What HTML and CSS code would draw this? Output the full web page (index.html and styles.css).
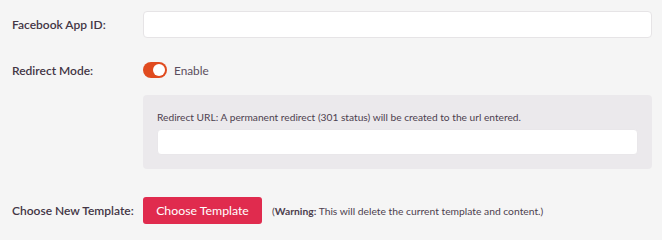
FILE: index.html
```html
<!DOCTYPE html>
<html>
<head>
<meta charset="utf-8">
<link rel="stylesheet" href="styles.css">
</head>
<body>
<div class="form">
  <div class="row row-first">
    <label class="label">Facebook App ID:</label>
    <div class="field"><input class="input" type="text"></div>
  </div>
  <div class="row row-toggle">
    <label class="label">Redirect Mode:</label>
    <div class="field toggle-field">
      <span class="toggle"><span class="knob"></span></span>
      <span class="toggle-text">Enable</span>
    </div>
  </div>
  <div class="row row-box">
    <div class="label"></div>
    <div class="field">
      <div class="box">
        <div class="box-text">Redirect URL: A permanent redirect (301 status) will be created to the url entered.</div>
        <input class="input input-inner" type="text">
      </div>
    </div>
  </div>
  <div class="row row-template">
    <label class="label">Choose New Template:</label>
    <div class="field template-field">
      <button class="btn">Choose Template</button>
      <span class="warning">(<b>Warning:</b> This will delete the current template and content.)</span>
    </div>
  </div>
</div>
</body>
</html>
```
FILE: styles.css
```css
html, body {
  margin: 0;
  padding: 0;
  background: #f5f5f5;
  font-family: Lato, "Open Sans", sans-serif;
  color: #3e3140;
}
.form {
  padding: 11px 10px 0 12px;
}
.row {
  display: flex;
  align-items: center;
}
.label {
  width: 131px;
  flex: none;
  font-size: 12px;
  font-weight: 600;
  color: #433645;
  white-space: nowrap;
}
.field {
  flex: 1;
  min-width: 0;
}
.input {
  display: block;
  box-sizing: border-box;
  width: 100%;
  height: 27px;
  margin: 0;
  padding: 0 8px;
  border: 1px solid #e6e4e6;
  border-radius: 4px;
  background: #ffffff;
  outline: none;
}
.row-toggle {
  margin-top: 24px;
}
.toggle-field {
  display: flex;
  align-items: center;
  gap: 7px;
}
.toggle {
  display: flex;
  align-items: center;
  justify-content: flex-end;
  box-sizing: border-box;
  width: 24px;
  height: 16px;
  padding: 0 2px;
  border-radius: 8px;
  background: #e04b1f;
}
.knob {
  width: 12px;
  height: 12px;
  border-radius: 50%;
  background: #ffffff;
}
.toggle-text {
  font-size: 11.8px;
  color: #5b4d5d;
}
.row-box {
  margin-top: 17px;
}
.box {
  background: #ebe9ec;
  border-radius: 4px;
  padding: 14px 14px 14px 14px;
}
.box-text {
  font-size: 10.2px;
  line-height: 16px;
  color: #4d3f4f;
  margin-bottom: 4px;
}
.input-inner {
  height: 26px;
  border: 1px solid #e9e7ea;
}
.row-template {
  margin-top: 28px;
}
.template-field {
  display: flex;
  align-items: center;
  gap: 10px;
}
.btn {
  box-sizing: border-box;
  height: 27px;
  width: 119px;
  padding: 0;
  border: none;
  border-radius: 3px;
  background: #e02b4e;
  color: #ffffff;
  font-family: Lato, "Open Sans", sans-serif;
  font-size: 12.3px;
  white-space: nowrap;
  cursor: pointer;
}
.warning {
  font-size: 10.3px;
  color: #4d3f4f;
  white-space: nowrap;
}
.warning b {
  font-weight: 700;
}
```
